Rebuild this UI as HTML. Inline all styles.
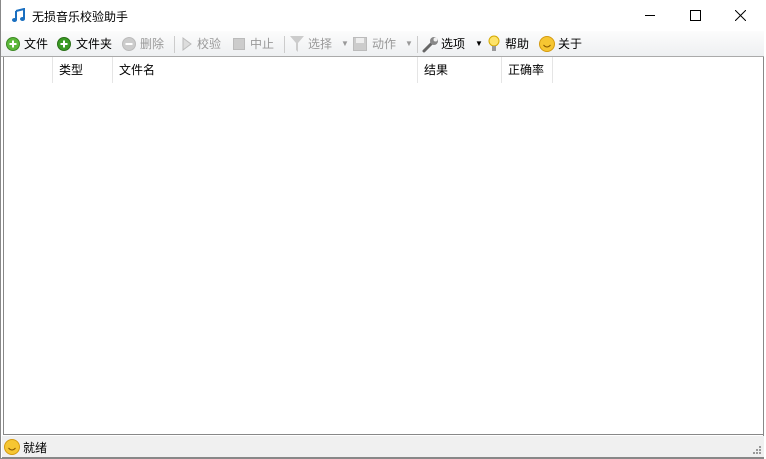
<!DOCTYPE html>
<html><head><meta charset="utf-8"><style>
*{margin:0;padding:0;box-sizing:border-box}
body{width:766px;height:459px;overflow:hidden;background:#fff;font-family:"Liberation Sans","Noto Sans CJK SC",sans-serif;font-size:12px;color:#000;position:relative}
.win{position:absolute;left:0;top:0;width:764px;height:459px;border:1px solid #888;border-top:none;background:#fff}
.title{position:absolute;left:0;top:0;width:764px;height:31px;background:#fff}
.title .t{position:absolute;left:31px;top:8px;font-size:12px}
.tb{position:absolute;left:0;top:31px;width:763px;height:26px;background:linear-gradient(#fcfcfc,#eef0f2);border-bottom:1px solid #aaa}
.it{position:absolute;top:5px;height:16px;line-height:16px;white-space:nowrap}
.dis{color:#999}
.sep{position:absolute;top:5px;width:1px;height:17px;background:#ccc}
.list{position:absolute;left:2px;top:57px;width:761px;height:378px;background:#fff;border-left:1px solid #888;border-right:1px solid #888;border-bottom:1px solid #888}
.hd{position:absolute;top:0;height:26px;border-right:1px solid #e5e5e5;line-height:27px;padding-left:6px}
.sb{position:absolute;left:1px;top:436px;width:762px;height:22px;background:#f0f0f0;border-bottom:1px solid #888}
svg{position:absolute}
</style></head><body>
<div class="win">
<div class="title">
<svg style="left:10px;top:8px" width="15" height="15" viewBox="0 0 15 15"><path d="M5 3 L13 1 V11" stroke="#1a6fc0" stroke-width="2" fill="none"/><path d="M5 3 V12" stroke="#1a6fc0" stroke-width="2"/><ellipse cx="3.5" cy="12" rx="2.5" ry="2" fill="#1a6fc0"/><ellipse cx="11.5" cy="11" rx="2.5" ry="2" fill="#1a6fc0"/></svg>
<span class="t">无损音乐校验助手</span>
<svg style="left:644px;top:15px" width="10" height="1"><rect width="10" height="1" fill="#000"/></svg>
<svg style="left:689px;top:10px" width="11" height="11"><rect x=".5" y=".5" width="10" height="10" fill="none" stroke="#000"/></svg>
<svg style="left:734px;top:10px" width="11" height="11"><path d="M0 0L11 11M11 0L0 11" stroke="#000"/></svg>
</div>
<div class="tb">
<svg style="left:5px;top:6px" width="14" height="14"><circle cx="7" cy="7" r="6.5" fill="#5cb83a" stroke="#3d8a24"/><path d="M7 3.5V10.5M3.5 7H10.5" stroke="#fff" stroke-width="2"/></svg>
<span class="it" style="left:23px">文件</span>
<svg style="left:56px;top:6px" width="14" height="14"><circle cx="7" cy="7" r="6.5" fill="#3a9a24" stroke="#2a7018"/><path d="M7 3.5V10.5M3.5 7H10.5" stroke="#fff" stroke-width="2"/></svg>
<span class="it" style="left:75px">文件夹</span>
<svg style="left:121px;top:6px" width="14" height="14"><circle cx="7" cy="7" r="6.5" fill="#ccc" stroke="#bbb"/><path d="M3.5 7H10.5" stroke="#fff" stroke-width="2"/></svg>
<span class="it dis" style="left:139px">删除</span>
<div class="sep" style="left:173px"></div>
<svg style="left:181px;top:6px" width="10" height="14"><path d="M1 1L9 7L1 13Z" fill="#ddd" stroke="#bbb"/></svg>
<span class="it dis" style="left:196px">校验</span>
<svg style="left:232px;top:7px" width="12" height="12"><rect x=".5" y=".5" width="11" height="11" fill="#ccc" stroke="#bbb"/></svg>
<span class="it dis" style="left:249px">中止</span>
<div class="sep" style="left:283px"></div>
<svg style="left:289px;top:5px" width="14" height="16"><path d="M0 0H14L8 7V16L6 14V7Z" fill="#ccc"/></svg>
<span class="it dis" style="left:307px">选择</span>
<span class="it dis" style="left:340px;font-size:8px">▼</span>
<svg style="left:352px;top:6px" width="14" height="14"><rect x=".5" y=".5" width="13" height="13" fill="#ccc" stroke="#bbb"/><rect x="3" y="1" width="8" height="5" fill="#eee"/></svg>
<span class="it dis" style="left:371px">动作</span>
<span class="it dis" style="left:404px;font-size:8px">▼</span>
<div class="sep" style="left:416px"></div>
<svg style="left:421px;top:5px" width="17" height="17"><path d="M2 15L10 7" stroke="#666" stroke-width="3" stroke-linecap="round"/><circle cx="12" cy="5" r="4" fill="#888"/><circle cx="13.5" cy="3.5" r="2" fill="#f0f0f0"/></svg>
<span class="it" style="left:440px">选项</span>
<span class="it" style="left:474px;font-size:8px">▼</span>
<svg style="left:487px;top:4px" width="12" height="18"><circle cx="6" cy="6" r="5" fill="#fde36a" stroke="#d4a800"/><rect x="4" y="11" width="4" height="5" fill="#999"/></svg>
<span class="it" style="left:504px">帮助</span>
<svg style="left:538px;top:5px" width="16" height="16"><circle cx="8" cy="8" r="7.5" fill="#f6c632" stroke="#d49a10"/><path d="M4.5 9Q8 13 11.5 9" stroke="#8a5a00" fill="none"/></svg>
<span class="it" style="left:557px">关于</span>
</div>
<div class="list">
<div class="hd" style="left:0;width:49px"></div>
<div class="hd" style="left:49px;width:60px">类型</div>
<div class="hd" style="left:109px;width:305px">文件名</div>
<div class="hd" style="left:414px;width:84px">结果</div>
<div class="hd" style="left:498px;width:51px">正确率</div>
</div>
<div class="sb">
<svg style="left:2px;top:3px" width="16" height="16"><circle cx="8" cy="8" r="7.5" fill="#f6c632" stroke="#d49a10"/><path d="M4.5 9Q8 13 11.5 9" stroke="#8a5a00" fill="none"/></svg>
<span style="position:absolute;left:21px;top:3px">就绪</span>
<svg style="left:750px;top:9px" width="10" height="10"><g fill="#999"><rect x="7" y="1" width="2" height="2"/><rect x="4" y="4" width="2" height="2"/><rect x="7" y="4" width="2" height="2"/><rect x="1" y="7" width="2" height="2"/><rect x="4" y="7" width="2" height="2"/><rect x="7" y="7" width="2" height="2"/></g></svg>
</div>
</div>
</body></html>
